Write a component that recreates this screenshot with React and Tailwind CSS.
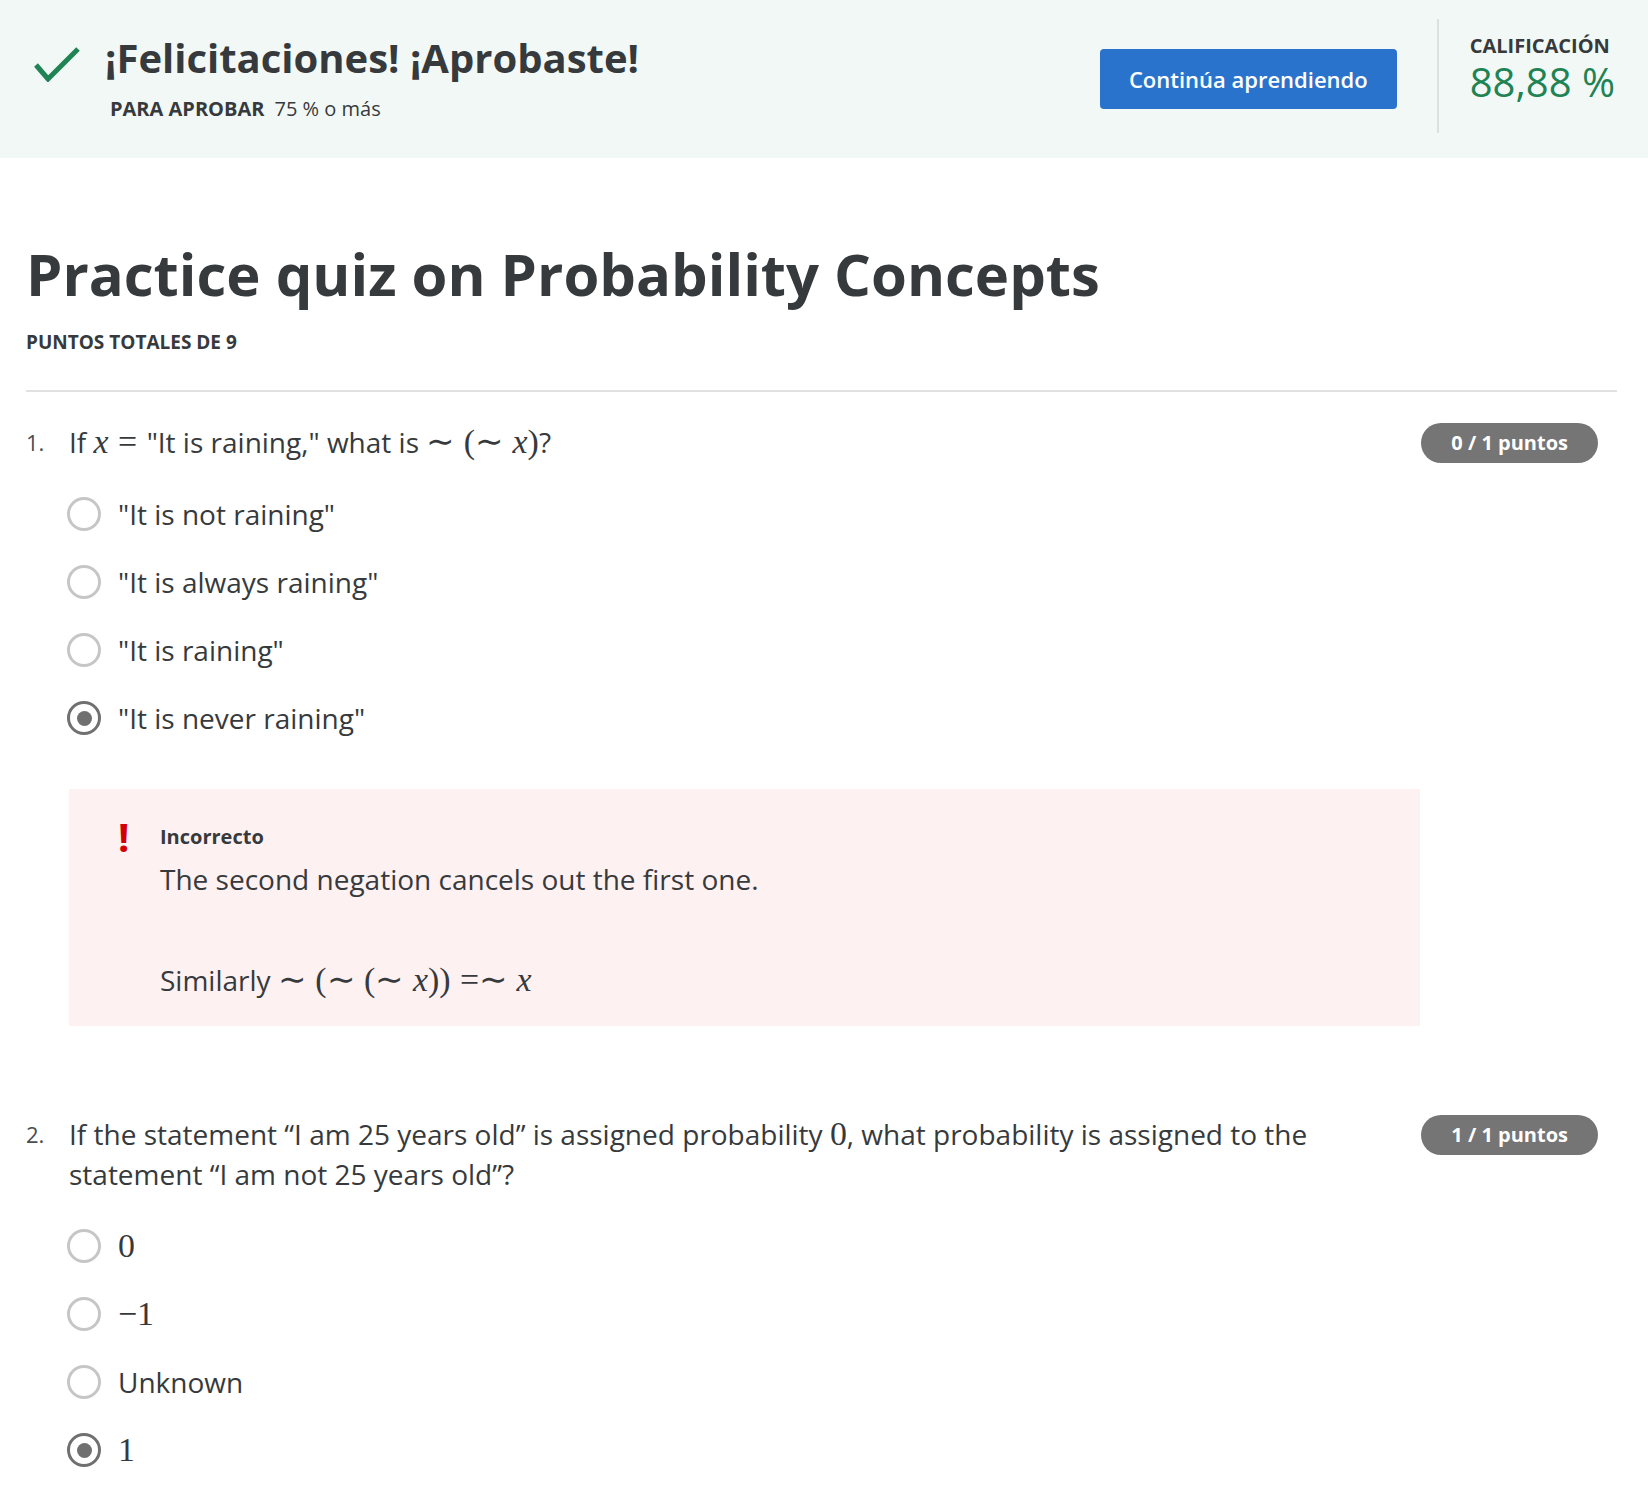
import React from 'react';

const sans = "[font-family:'Open_Sans',sans-serif]";
const serif = "[font-family:'Liberation_Serif',serif]";

// inline math, sized like KaTeX next to body text
function M({ children }) {
  return <span className={`${serif} text-[1.21em] leading-[0]`}>{children}</span>;
}

// relation symbol with thick spacing around it
function R({ children, left = true, right = true }) {
  return (
    <span className={`${left ? 'ml-[0.28em]' : ''} ${right ? 'mr-[0.28em]' : ''}`}>{children}</span>
  );
}

function Radio({ checked }) {
  return (
    <span
      className={`flex h-[34px] w-[34px] shrink-0 items-center justify-center rounded-full border-[3px] ${
        checked ? 'border-[#707070]' : 'border-[#c6c6c6]'
      }`}
    >
      {checked && <span className="h-[15px] w-[15px] rounded-full bg-[#707070]" />}
    </span>
  );
}

function Option({ checked, children }) {
  return (
    <div className="flex h-[68px] items-center gap-[17px]">
      <Radio checked={checked} />
      <span className="text-[28px] leading-[40px] text-[#373a3c]">{children}</span>
    </div>
  );
}

function Question({ num, points, children }) {
  return (
    <div className="flex items-start">
      <span className="w-[43px] shrink-0 pt-[2px] text-[22px] leading-[36px] text-[#4a4d50]">{num}.</span>
      <div className="flex-1 pr-[40px] text-[28px] leading-[40px] text-[#373a3c]">{children}</div>
      <span className="mr-[19px] mt-[1px] shrink-0 rounded-full bg-[#757575] px-[30px] text-[20px] font-bold leading-[40px] text-white">
        {points}
      </span>
    </div>
  );
}

export default function App() {
  return (
    <div className={`${sans} min-h-screen w-[1648px] bg-white text-[#373a3c]`}>
      {/* result banner */}
      <header className="flex h-[158px] items-start bg-[#f2f8f6]">
        <div className="flex flex-1 pl-[34px] pt-[46px]">
          <svg width="46" height="36" viewBox="0 0 46 36">
            <polyline points="2,19 14,33 44,3" fill="none" stroke="#1f8354" strokeWidth="5" />
          </svg>
          <div className="ml-[25px]">
            <h1 className="text-[40px] font-bold leading-[24px] text-[#373a3c]">¡Felicitaciones! ¡Aprobaste!</h1>
            <p className="ml-[5px] mt-[25px] text-[20px] leading-[28px]">
              <span className="font-bold uppercase">Para aprobar</span>
              <span className="ml-[10px]">75 % o más</span>
            </p>
          </div>
        </div>
        <button className="mt-[49px] h-[60px] rounded-[4px] bg-[#2a73cc] px-[29px] text-[22px] font-semibold text-white">
          Continúa aprendiendo
        </button>
        <div className="ml-[40px] mt-[19px] h-[114px] w-[2px] bg-[#dde1e0]" />
        <div className="ml-[31px] mr-[33px] mt-[34px]">
          <div className="text-[20px] font-bold uppercase leading-[24px]">Calificación</div>
          <div className="mt-[2px] text-[40px] leading-[44px] text-[#1f8354]">88,88 %</div>
        </div>
      </header>

      <main className="pl-[26px] pr-[31px]">
        <h2 className="mt-[82px] text-[58px] font-bold leading-[68px] text-[#373a3c]">
          Practice quiz on Probability Concepts
        </h2>
        <div className="mt-[20px] text-[19px] font-bold uppercase leading-[28px]">Puntos totales de 9</div>
        <div className="mt-[34px] h-[2px] bg-[#e1e1e1]" />

        <div className="mt-[30px]">
          <Question num={1} points="0 / 1 puntos">
            If <M><i>x</i><R>=</R></M>"It is raining," what is <M><R left={false}>∼</R>(<R left={false}>∼</R><i>x</i>)</M>?
          </Question>
          <div className="ml-[41px] mt-[17px]">
            <Option>"It is not raining"</Option>
            <Option>"It is always raining"</Option>
            <Option>"It is raining"</Option>
            <Option checked>"It is never raining"</Option>
          </div>

          <div className="ml-[43px] mr-[197px] mt-[37px] flex bg-[#fdf1f2] pb-[26px] pl-[49px] pt-[26px]">
            <span className="w-[42px] shrink-0 text-[40px] font-bold leading-[44px] text-[#d30001]">!</span>
            <div>
              <div className="mt-[8px] text-[20px] font-bold leading-[28px]">Incorrecto</div>
              <p className="mt-[8px] text-[28px] leading-[40px]">The second negation cancels out the first one.</p>
              <p className="mt-[61px] text-[28px] leading-[40px]">
                Similarly{' '}
                <M>
                  <R left={false}>∼</R>(<R left={false}>∼</R>(<R left={false}>∼</R><i>x</i>))<R>=∼</R><i>x</i>
                </M>
              </p>
            </div>
          </div>
        </div>

        <div className="mt-[88px]">
          <Question num={2} points="1 / 1 puntos">
            If the statement “I am 25 years old” is assigned probability <M>0</M>, what probability is assigned to the
            statement “I am not 25 years old”?
          </Question>
          <div className="ml-[41px] mt-[18px]">
            <Option><M>0</M></Option>
            <Option><M>−1</M></Option>
            <Option>Unknown</Option>
            <Option checked><M>1</M></Option>
          </div>
        </div>
      </main>
    </div>
  );
}
